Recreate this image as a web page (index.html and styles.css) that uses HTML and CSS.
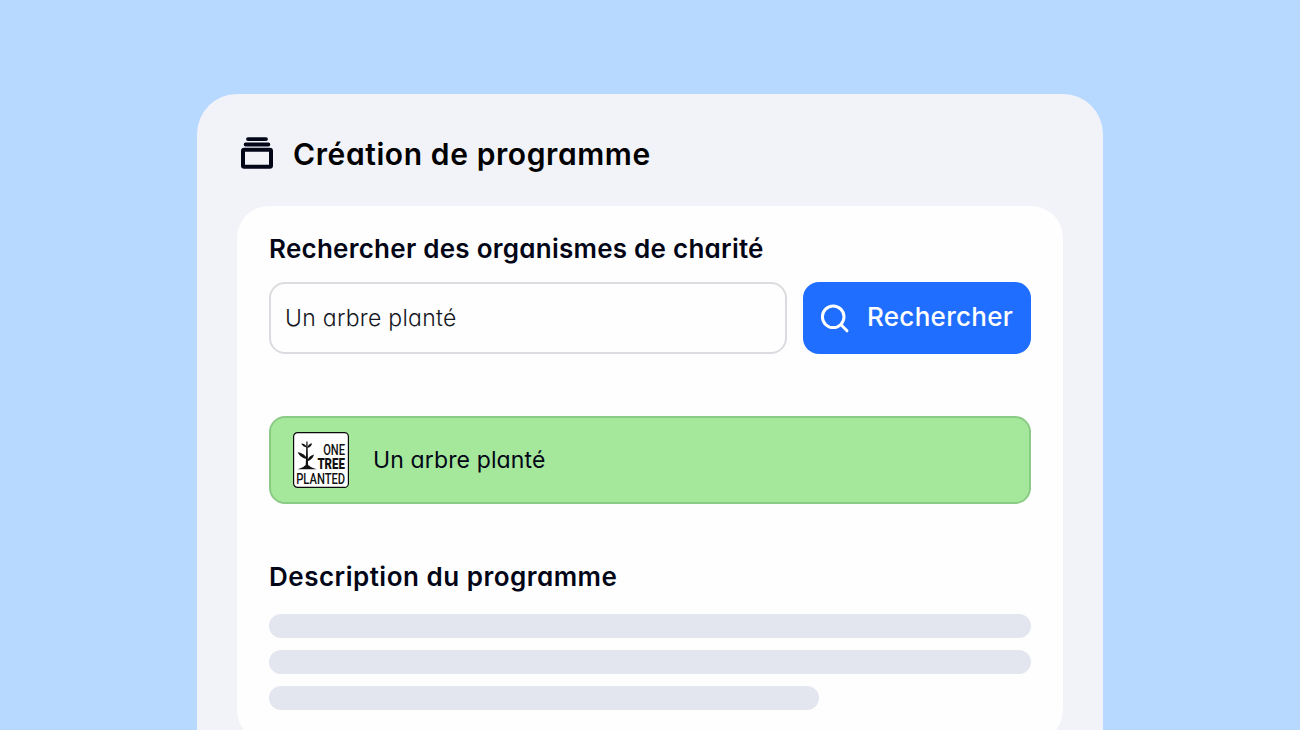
FILE: index.html
```
<!DOCTYPE html>
<html lang="fr">
<head>
  <meta charset="UTF-8" />
  <meta name="viewport" content="width=device-width, initial-scale=1.0"/>
  <title>Création de programme</title>
  <link rel="stylesheet" href="styles.css">
</head>
<body>

  <main class="panel">
    <header class="panel-header">
      <svg class="stack-icon" width="32" height="32" viewBox="0 0 32 32" fill="none" stroke="#020617" stroke-width="3.8">
        <path d="M7 2.1h18M4.6 7.5h22.8" stroke-linecap="round"/>
        <rect x="2" y="12.8" width="28" height="17" rx="1.2" stroke-width="4"/>
      </svg>
      <h1>Création de programme</h1>
    </header>

    <section class="card">
      <h2 class="search-title">Rechercher des organismes de charité</h2>
      <form class="search-row">
        <input class="search-input" type="text" value="Un arbre planté" aria-label="Rechercher" />
        <button class="search-btn" type="button">
          <svg width="32" height="32" viewBox="0 0 32 32" fill="none" stroke="#fff" stroke-width="3">
            <circle cx="14.2" cy="14.8" r="10.8"/>
            <path d="M22 22.8l6 6" stroke-linecap="round"/>
          </svg>
          <span>Rechercher</span>
        </button>
      </form>

      <div class="result">
        <svg class="charity-logo" width="56" height="56" viewBox="0 0 56 56">
          <rect x=".6" y=".6" width="54.8" height="54.8" rx="4" fill="#fff" stroke="#0b0b0b" stroke-width="1.2"/>
          <g fill="#111">
            <path d="M4.5 37.2c3-1 5.6-1.6 7.2-3.5.8-.9 3.8-.9 4.6 0 1.7 1.9 4.4 2.5 7.4 3.5z"/>
            <path d="M8.2 11.4c2.8.2 4.8 1.1 5.7 4-2.6-.4-4.6-1.5-5.7-4zM19.2 11.2c-2.8.6-4.4 2-5 4.8 2.6-.6 4.3-2.2 5-4.8z"/>
            <path d="M4.6 20.2c4.5.7 7.9 2.7 9.4 6.8-4.4-.8-7.6-2.9-9.4-6.8zM21 22.6c-3.6.9-6 3-6.7 6.8 3.7-1.1 5.8-3.3 6.7-6.8z"/>
            <path d="M13.4 9.4h1.1l.6 25.1h-2.4z"/>
          </g>
          <g class="logo-text">
            <text x="30.2" y="22.8" textLength="21.8" lengthAdjust="spacingAndGlyphs">ONE</text>
            <text class="logo-bold" x="24.4" y="37.3" textLength="27.5" lengthAdjust="spacingAndGlyphs">TREE</text>
            <text x="3.2" y="51.7" textLength="49" lengthAdjust="spacingAndGlyphs">PLANTED</text>
          </g>
        </svg>
        <span class="result-name">Un arbre planté</span>
      </div>

      <h2 class="description-title">Description du programme</h2>
      <div class="lines">
        <div class="line"></div>
        <div class="line"></div>
        <div class="line line-short"></div>
      </div>
    </section>
  </main>

</body>
</html>
```
FILE: styles.css
```
* { box-sizing: border-box; }

body {
  margin: 0;
  height: 100vh;
  overflow: hidden;
  padding-top: 94px;
  background: #b8d9ff;
  color: #020617;
  font-family: Inter, sans-serif;
  /* single-storey "a" */
  font-feature-settings: "cv11";
}

h1,
h2 {
  margin: 0;
  font-weight: 600;
  white-space: nowrap;
}

.panel {
  width: 906px;
  height: 636px;
  overflow: hidden;
  margin: 0 auto;
  padding: 0 40px;
  background: #f1f3f9;
  border-radius: 40px 40px 0 0;
}

.panel-header {
  display: flex;
  align-items: center;
  gap: 20px;
  height: 112px;
  padding: 8px 0 0 4px;
}

.stack-icon {
  margin-bottom: 3px;
}

.panel-header h1 {
  color: #000;
  font-size: 30px;
  line-height: 40px;
  letter-spacing: 0.6px;
}

.card {
  height: 536px;
  padding: 26px 32px;
  background: #fefefe;
  border-radius: 32px;
}

.card h2 {
  font-size: 26px;
  line-height: 34px;
}

.card .search-title {
  letter-spacing: 0.25px;
}

.search-row {
  display: flex;
  gap: 16px;
  margin-top: 16px;
}

.search-input {
  flex: 1;
  min-width: 0;
  height: 72px;
  padding: 0 14px;
  border: 2px solid #dcdce0;
  border-radius: 16px;
  outline: none;
  background: #fefefe;
  color: #15171f;
  font: inherit;
  font-feature-settings: inherit;
  font-size: 23px;
  font-weight: 300;
  letter-spacing: 0.28px;
}

.search-btn {
  display: flex;
  align-items: center;
  gap: 16px;
  width: 228px;
  height: 72px;
  padding: 0 16px;
  border: none;
  border-radius: 16px;
  background: #1f6eff;
  color: #fff;
  font: inherit;
  font-feature-settings: inherit;
  font-size: 26px;
  font-weight: 500;
  letter-spacing: 0.3px;
  cursor: pointer;
}

.search-btn span {
  padding-bottom: 3px;
}

.result {
  display: flex;
  align-items: center;
  gap: 24px;
  height: 88px;
  margin-top: 62px;
  padding: 0 22px;
  border: 2px solid #8bcb85;
  border-radius: 16px;
  background: #a6e89b;
}

.result-name {
  font-size: 23px;
  letter-spacing: 0.13px;
}

.logo-text {
  fill: #111;
  font-family: Roboto, sans-serif;
  font-size: 15.5px;
  font-weight: 500;
}

.logo-bold {
  font-size: 14.5px;
  font-weight: 900;
}

.card .description-title {
  margin-top: 56px;
  letter-spacing: 0.5px;
}

.lines {
  display: flex;
  flex-direction: column;
  gap: 12px;
  margin-top: 20px;
}

.line {
  height: 24px;
  border-radius: 12px;
  background: #e3e6ef;
}

.line-short {
  width: 550px;
}
```
